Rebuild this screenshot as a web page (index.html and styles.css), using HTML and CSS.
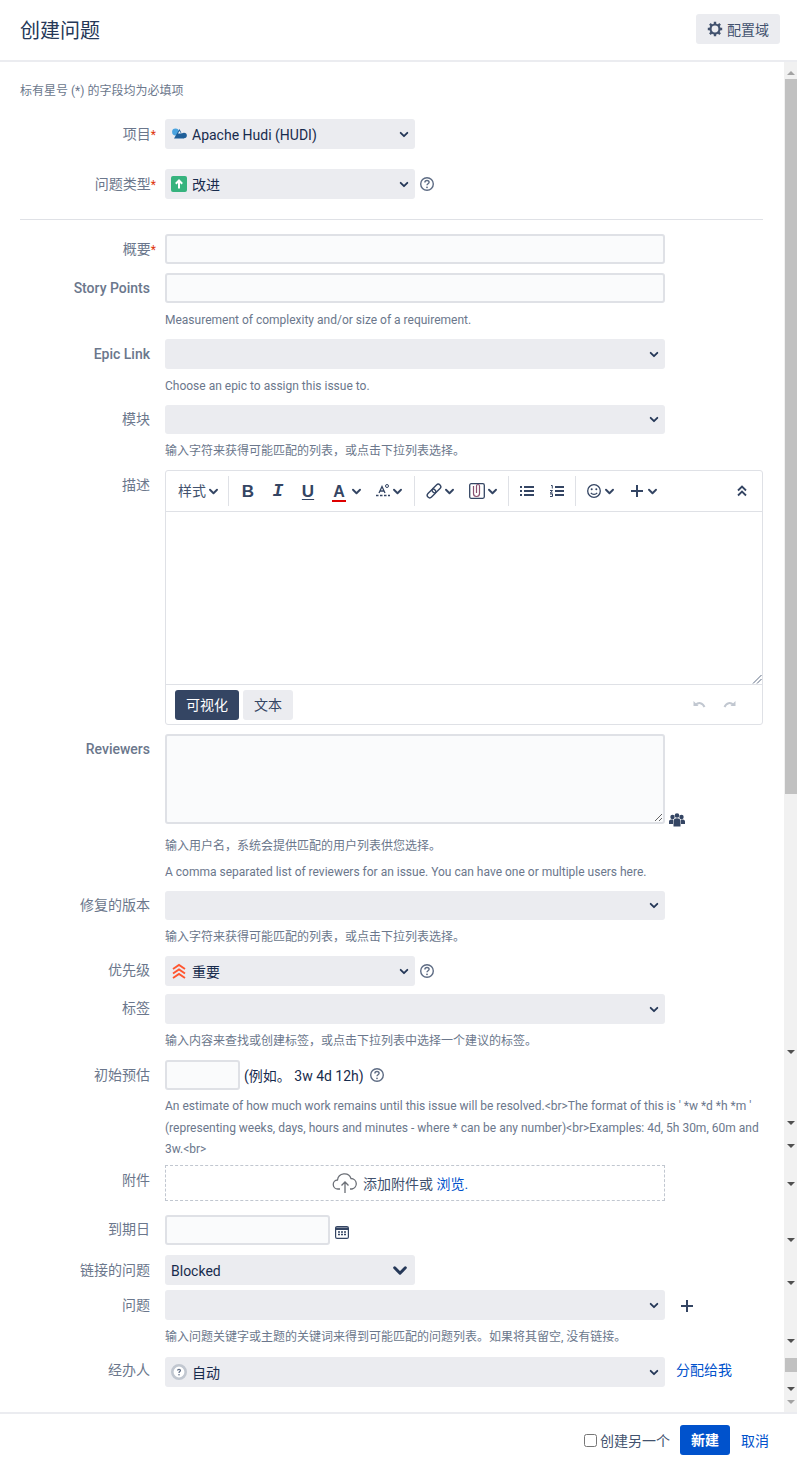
FILE: index.html
```html
<!DOCTYPE html>
<html lang="zh-CN">
<head>
    <meta charset="UTF-8">
    <meta name="viewport" content="width=device-width, initial-scale=1.0">
    <title>创建问题</title>
    <link rel="stylesheet" href="styles.css">
</head>
<body>

<!-- Shared icons -->
<svg class="defs" width="0" height="0">
    <symbol id="chev" viewBox="0 0 12 8"><path d="M2 2l4 4 4-4" fill="none" stroke="currentColor" stroke-width="2.200" stroke-linecap="round" stroke-linejoin="round"/></symbol>
    <symbol id="help" viewBox="0 0 16 16"><circle cx="8" cy="8" r="6.300" fill="none" stroke="currentColor" stroke-width="1.400"/><path d="M5.900 6.400c0-1.200 1-1.900 2.100-1.900s2.100.7 2.100 1.800c0 1.500-2.100 1.500-2.100 3" fill="none" stroke="currentColor" stroke-width="1.400"/><circle cx="8" cy="11.300" r=".9" fill="currentColor"/></symbol>
</svg>

<div class="dialog">
    <!-- Header -->
    <div class="dialog-head">
        <h1>创建问题</h1>
        <a href="#" class="config-btn">
            <svg width="16" height="16" viewBox="0 0 16 16"><circle cx="8" cy="8" r="4.500" fill="none" stroke="currentColor" stroke-width="2.200"/><path d="M8 .8v3M8 12.200v3M.8 8h3M12.200 8h3M2.900 2.900l2.100 2.100M11 11l2.100 2.100M2.900 13.100L5 11M11 5l2.100-2.100" stroke="currentColor" stroke-width="2.400"/></svg>
            配置域
        </a>
    </div>

    <div class="dialog-main">
        <form class="form">
            <p class="required-note">标有星号 (*) 的字段均为必填项</p>

            <div class="row gap-20">
                <label class="label">项目<span class="star">*</span></label>
                <div class="select short">
                    <svg class="opt-icon" width="16" height="16" viewBox="0 0 16 16"><circle cx="4.500" cy="6" r="3.400" fill="#4aa3df"/><circle cx="13" cy="9.500" r="2.800" fill="#1f5f99"/><path d="M3 12.500L8.500 3l4.500 9.500z" fill="#1f5f99"/><path d="M7 7.500L8.500 5 10 7.500z" fill="#fff"/></svg>
                    <span>Apache Hudi (HUDI)</span>
                    <svg class="chev"><use href="#chev"/></svg>
                </div>
            </div>

            <div class="row gap-20">
                <label class="label">问题类型<span class="star">*</span></label>
                <div class="select short">
                    <svg class="opt-icon" width="16" height="16" viewBox="0 0 16 16"><rect width="16" height="16" rx="2" fill="#36b37e"/><path d="M8 12.500V4.500M4.800 7.700L8 4.500l3.200 3.200" fill="none" stroke="#fff" stroke-width="2"/></svg>
                    <span>改进</span>
                    <svg class="chev"><use href="#chev"/></svg>
                </div>
                <svg class="help"><use href="#help"/></svg>
            </div>

            <hr class="divider">

            <div class="row">
                <label class="label">概要<span class="star">*</span></label>
                <input type="text" class="input long">
            </div>

            <div class="row gap-9">
                <label class="label strong">Story Points</label>
                <input type="text" class="input long">
            </div>
            <p class="desc">Measurement of complexity and/or size of a requirement.</p>

            <div class="row">
                <label class="label strong">Epic Link</label>
                <div class="select long"><svg class="chev"><use href="#chev"/></svg></div>
            </div>
            <p class="desc">Choose an epic to assign this issue to.</p>

            <div class="row">
                <label class="label high">模块</label>
                <div class="select long thin"><svg class="chev"><use href="#chev"/></svg></div>
            </div>
            <p class="desc">输入字符来获得可能匹配的列表，或点击下拉列表选择。</p>

            <!-- Editor -->
            <div class="row">
                <label class="label">描述</label>
                <div class="editor">
                    <div class="toolbar">
                        <div class="tool-group">
                            <span class="tool style-tool">样式<svg class="tool-chev"><use href="#chev"/></svg></span>
                        </div>
                        <div class="tool-group">
                            <span class="tool tool-b">B</span>
                            <span class="tool tool-i">I</span>
                            <span class="tool tool-u">U</span>
                            <span class="tool drop tool-a"><span class="color-a">A</span><svg class="tool-chev"><use href="#chev"/></svg></span>
                            <span class="tool drop">
                                <svg width="18" height="16" viewBox="0 0 18 16"><path d="M4 10L7 3.500 10 10M5.300 8h3.400" fill="none" stroke="currentColor" stroke-width="1.300"/><circle cx="12" cy="3" r="1.500" fill="none" stroke="currentColor"/><path d="M1 12.500h14" stroke="currentColor" stroke-width="1.300" stroke-dasharray="2.500 1.500"/></svg>
                                <svg class="tool-chev tight"><use href="#chev"/></svg>
                            </span>
                        </div>
                        <div class="tool-group">
                            <span class="tool drop">
                                <svg width="16" height="16" viewBox="0 0 16 16"><g transform="rotate(-45 8 8)" fill="none" stroke="currentColor" stroke-width="1.400"><rect x="-.5" y="5.500" width="10" height="5" rx="2.500"/><rect x="6.500" y="5.500" width="10" height="5" rx="2.500"/></g></svg>
                                <svg class="tool-chev"><use href="#chev"/></svg>
                            </span>
                            <span class="tool drop">
                                <svg width="16" height="16" viewBox="0 0 16 16"><rect x=".7" y=".7" width="14.600" height="14.600" rx="1.500" fill="none" stroke="currentColor" stroke-width="1.300"/><path d="M4.500 3v7.500a3 3 0 0 0 6 0V3a1.500 1.500 0 0 0-3 0v7" fill="none" stroke="#8a5070" stroke-width="1.200"/></svg>
                                <svg class="tool-chev"><use href="#chev"/></svg>
                            </span>
                        </div>
                        <div class="tool-group tight">
                            <span class="tool">
                                <svg width="14" height="12" viewBox="0 0 14 12"><path d="M0 2h2M4 2h10M0 6h2M4 6h10M0 10h2M4 10h10" stroke="currentColor" stroke-width="2"/></svg>
                            </span>
                            <span class="tool">
                                <svg width="14" height="12" viewBox="0 0 14 12"><path d="M1 .5h1.300v3M0 5.500h2.500L.3 8h2.400M0 9h2.500v2.500H0" fill="none" stroke="currentColor"/><path d="M5 2h9M5 6h9M5 10h9" stroke="currentColor" stroke-width="2"/></svg>
                            </span>
                        </div>
                        <div class="tool-group tight plain">
                            <span class="tool drop">
                                <svg width="16" height="16" viewBox="0 0 16 16"><circle cx="8" cy="8" r="6.300" fill="none" stroke="currentColor" stroke-width="1.300"/><circle cx="5.700" cy="6.300" r="1" fill="currentColor"/><circle cx="10.300" cy="6.300" r="1" fill="currentColor"/><path d="M4.800 9.800c1.500 2 4.900 2 6.400 0" fill="none" stroke="currentColor" stroke-width="1.200"/></svg>
                                <svg class="tool-chev"><use href="#chev"/></svg>
                            </span>
                            <span class="tool drop">
                                <svg width="16" height="16" viewBox="0 0 16 16"><path d="M8 2v12M2 8h12" stroke="currentColor" stroke-width="2"/></svg>
                                <svg class="tool-chev"><use href="#chev"/></svg>
                            </span>
                        </div>
                        <span class="collapse">
                            <svg width="10" height="12" viewBox="0 0 10 12"><path d="M1 5.500l4-4 4 4M1 10.500l4-4 4 4" fill="none" stroke="currentColor" stroke-width="1.800"/></svg>
                        </span>
                    </div>
                    <div class="editor-body">
                        <svg class="grip" width="10" height="10" viewBox="0 0 10 10"><path d="M9.500 1L1 9.500M9.500 5L5 9.500" stroke="#5e6c84"/></svg>
                    </div>
                    <div class="editor-foot">
                        <a href="#" class="mode on">可视化</a>
                        <a href="#" class="mode">文本</a>
                        <span class="history">
                            <svg width="15" height="10" viewBox="0 0 14 10"><path d="M1 1v5h5z" fill="currentColor"/><path d="M3 5c3-3 7-2.500 9 2" fill="none" stroke="currentColor" stroke-width="2"/></svg>
                            <svg width="15" height="10" viewBox="0 0 14 10"><path d="M13 1v5H8z" fill="currentColor"/><path d="M11 5C8 2 4 2.500 2 7" fill="none" stroke="currentColor" stroke-width="2"/></svg>
                        </span>
                    </div>
                </div>
            </div>

            <div class="row gap-9">
                <label class="label strong">Reviewers</label>
                <textarea class="input long reviewers"></textarea>
                <svg class="users" width="16" height="14" viewBox="0 0 16 14"><circle cx="3.500" cy="4" r="2.200" fill="#344563"/><circle cx="12.500" cy="4" r="2.200" fill="#344563"/><circle cx="8" cy="2.500" r="2.300" fill="#344563"/><path d="M0 11V8.500C0 7 1.500 6.500 3 6.500h1V11zM16 11V8.500c0-1.500-1.500-2-3-2h-1V11z" fill="#344563"/><path d="M4.500 13.500V8c0-2 1.500-2.800 3.500-2.800S11.500 6 11.500 8v5.500z" fill="#344563"/></svg>
            </div>
            <p class="desc first">输入用户名，系统会提供匹配的用户列表供您选择。</p>
            <p class="desc">A comma separated list of reviewers for an issue. You can have one or multiple users here.</p>

            <div class="row">
                <label class="label high">修复的版本</label>
                <div class="select long thin"><svg class="chev"><use href="#chev"/></svg></div>
            </div>
            <p class="desc">输入字符来获得可能匹配的列表，或点击下拉列表选择。</p>

            <div class="row">
                <label class="label high">优先级</label>
                <div class="select short">
                    <svg class="opt-icon" width="16" height="16" viewBox="0 0 16 16"><path d="M2 6l6-4 6 4M2 10.500l6-4 6 4M2 15l6-4 6 4" fill="none" stroke="#ff5630" stroke-width="1.900"/></svg>
                    <span>重要</span>
                    <svg class="chev"><use href="#chev"/></svg>
                </div>
                <svg class="help"><use href="#help"/></svg>
            </div>

            <div class="row gap-8">
                <label class="label high">标签</label>
                <div class="select long"><svg class="chev"><use href="#chev"/></svg></div>
            </div>
            <p class="desc">输入内容来查找或创建标签，或点击下拉列表中选择一个建议的标签。</p>

            <div class="row">
                <label class="label">初始预估</label>
                <input type="text" class="input tiny">
                <span class="estimate">(例如。 3w 4d 12h)</span>
                <svg class="help near"><use href="#help"/></svg>
            </div>
            <p class="desc tall">An estimate of how much work remains until this issue will be resolved.&lt;br&gt;The format of this is ' *w *d *h *m ' (representing weeks, days, hours and minutes - where * can be any number)&lt;br&gt;Examples: 4d, 5h 30m, 60m and 3w.&lt;br&gt;</p>

            <div class="row">
                <label class="label">附件</label>
                <div class="dropzone">
                    <svg width="26" height="22" viewBox="0 0 26 22"><path d="M8 17H6a4.500 4.500 0 0 1-.5-9A7 7 0 0 1 19 6.500 5.300 5.300 0 0 1 20 17h-2" fill="none" stroke="#6b6f76" stroke-width="1.300"/><path d="M13 21V10M9.500 13.500L13 10l3.500 3.500" fill="none" stroke="#6b6f76" stroke-width="1.300"/></svg>
                    <span>添加附件或 <a href="#">浏览.</a></span>
                </div>
            </div>

            <div class="row gap-14">
                <label class="label high">到期日</label>
                <input type="text" class="input date">
                <svg class="calendar" width="14" height="14" viewBox="0 0 14 14"><rect x=".6" y="1.600" width="12.800" height="11.800" rx="1.500" fill="none" stroke="#344563" stroke-width="1.200"/><path d="M1 2.500h12V5H1z" fill="#344563"/><path d="M3 7h2M6 7h2M9 7h2M3 9.500h2M6 9.500h2M9 9.500h2" stroke="#344563" stroke-width="1.400"/></svg>
            </div>

            <div class="row gap-10">
                <label class="label">链接的问题</label>
                <div class="select short">
                    <span>Blocked</span>
                    <svg class="chev big"><use href="#chev"/></svg>
                </div>
            </div>

            <div class="row gap-5">
                <label class="label">问题</label>
                <div class="select long"><svg class="chev"><use href="#chev"/></svg></div>
                <svg class="plus" width="14" height="14" viewBox="0 0 14 14"><path d="M7 1v12M1 7h12" stroke="#344563" stroke-width="2"/></svg>
            </div>
            <p class="desc wide-after">输入问题关键字或主题的关键词来得到可能匹配的问题列表。如果将其留空, 没有链接。</p>

            <div class="row">
                <label class="label top">经办人</label>
                <div class="select long">
                    <svg class="opt-icon" width="16" height="16" viewBox="0 0 16 16"><circle cx="8" cy="8" r="6.700" fill="#fff" stroke="#c1c7d0" stroke-width="2.600"/><path d="M6.500 6.500C6.500 5 9.500 5 9.500 6.500 9.500 7.700 8 7.500 8 9" fill="none" stroke="#5e6c84" stroke-width="1.200"/><circle cx="8" cy="10.800" r=".8" fill="#5e6c84"/></svg>
                    <span>自动</span>
                    <svg class="chev"><use href="#chev"/></svg>
                </div>
                <a href="#" class="assign-me">分配给我</a>
            </div>
        </form>

        <!-- Stacked scrollbar -->
        <div class="scrollbar">
            <div class="thumb thumb-main"></div>
            <div class="thumb thumb-small"></div>
            <i class="arrow up" style="top: 9px"></i>
            <i class="arrow" style="top: 988px"></i>
            <i class="arrow" style="top: 1059px"></i>
            <i class="arrow" style="top: 1082px"></i>
            <i class="arrow" style="top: 1120px"></i>
            <i class="arrow" style="top: 1176px"></i>
            <i class="arrow" style="top: 1219px"></i>
            <i class="arrow" style="top: 1277px"></i>
            <i class="arrow" style="top: 1325px"></i>
            <i class="arrow off" style="top: 1338px"></i>
        </div>
    </div>

    <!-- Footer -->
    <div class="dialog-foot">
        <label class="another"><input type="checkbox">创建另一个</label>
        <a href="#" class="create-btn">新建</a>
        <a href="#" class="cancel">取消</a>
    </div>
</div>

</body>
</html>
```

FILE: styles.css
```css
/* General Reset */
* {
    margin: 0;
    padding: 0;
    box-sizing: border-box;
}

body {
    font-family: Roboto, "Noto Sans CJK SC", sans-serif;
    font-size: 14px;
    color: #172b4d;
    background: #fff;
    overflow: hidden;
}

a {
    text-decoration: none;
    color: #0052cc;
}

.defs {
    position: absolute;
}

.dialog {
    display: flex;
    flex-direction: column;
    height: 1463px;
}

/* Header */
.dialog-head {
    display: flex;
    justify-content: space-between;
    align-items: center;
    flex: none;
    height: 62px;
    padding: 0 17px 2px 20px;
    border-bottom: 2px solid #ebecf0;
}

.dialog-head h1 {
    font-size: 20px;
    font-weight: 400;
    color: #253858;
}

.config-btn {
    display: flex;
    align-items: center;
    justify-content: center;
    gap: 4px;
    width: 84px;
    height: 30px;
    border-radius: 3px;
    background: #ebecf0;
    color: #42526e;
    font-size: 14px;
}

.dialog-main {
    display: flex;
    flex: 1;
    min-height: 0;
}

.form {
    flex: 1;
    padding: 20px 21px 0 20px;
}

.required-note {
    height: 17px;
    font-size: 12px;
    line-height: 19px;
    color: #6b778c;
}

/* Rows */
.row {
    display: flex;
    align-items: flex-start;
}

.gap-5 { margin-top: 5px; }
.gap-8 { margin-top: 8px; }
.gap-9 { margin-top: 9px; }
.gap-10 { margin-top: 10px; }
.gap-14 { margin-top: 14px; }
.gap-20 { margin-top: 20px; }

.label {
    flex: none;
    width: 130px;
    height: 29px;
    margin-right: 15px;
    line-height: 30px;
    text-align: right;
    color: #6b778c;
    font-size: 14px;
}

.label.strong {
    font-weight: 500;
}

.label.high {
    line-height: 28px;
}

.label.top {
    line-height: 26px;
}

.star {
    margin-right: -6px;
    color: #de350b;
    font-size: 12px;
}

.divider {
    height: 1px;
    border: none;
    background: #dfe1e6;
    margin: 20px 0 14px;
}

.desc {
    height: 18px;
    margin: 7px 0 11px 145px;
    font-size: 12px;
    line-height: 20px;
    color: #6b778c;
}

.desc.first {
    margin-top: 12px;
    margin-bottom: 8px;
}

.desc.tall {
    height: 64.5px;
    margin-top: 6px;
    margin-bottom: 4.5px;
    line-height: 21.5px;
}

.desc.wide-after {
    margin-bottom: 12px;
}

/* Fields */
.select {
    display: flex;
    align-items: center;
    height: 30px;
    padding-left: 6px;
    border-radius: 3px;
    background: #ebecf0;
    line-height: 30px;
}

.select span {
    margin-top: 1px;
}

.select.thin {
    height: 29px;
}

.short { width: 250px; }
.long { width: 500px; }

.opt-icon {
    flex: none;
    margin-right: 5px;
}

.chev {
    width: 10px;
    height: 7px;
    margin-left: auto;
    margin-right: 6px;
    color: #253858;
}

.chev.big {
    width: 16px;
    height: 11px;
    margin-right: 7px;
}

.help {
    width: 16px;
    height: 16px;
    margin: 7px 0 0 4px;
    color: #5e6c84;
}

.help.near {
    margin-left: 5px;
}

.input {
    display: block;
    height: 30px;
    border: 2px solid #dfe1e6;
    border-radius: 3px;
    background: #fafbfc;
}

.tiny { width: 75px; }
.date { width: 165px; }

.reviewers {
    height: 90px;
    resize: both;
}

.users {
    align-self: flex-end;
    margin: 0 0 -3px 4px;
}

.estimate {
    height: 30px;
    margin-left: 4px;
    font-size: 14px;
    line-height: 32px;
    color: #172b4d;
}

.dropzone {
    display: flex;
    align-items: center;
    justify-content: center;
    gap: 5px;
    width: 500px;
    height: 36px;
    padding-right: 30px;
    border: 1px dashed #c1c7d0;
    font-size: 14px;
    color: #42526e;
}

.calendar {
    margin: 10px 0 0 5px;
}

.plus {
    margin: 9px 0 0 15px;
}

.assign-me {
    margin-left: 11px;
    font-size: 14px;
    line-height: 26px;
}

/* Editor */
.editor {
    width: 598px;
    height: 255px;
    display: flex;
    flex-direction: column;
    border: 1px solid #dfe1e6;
    border-radius: 3px;
}

.toolbar {
    display: flex;
    align-items: center;
    flex: none;
    height: 41px;
    border-bottom: 1px solid #dfe1e6;
    color: #344563;
}

.tool-group {
    display: flex;
    align-items: center;
    height: 30px;
    padding: 0 3px 0 4px;
    border-right: 1px solid #dfe1e6;
}

.tool-group.tight {
    padding-left: 3px;
}

.tool-group.plain {
    border-right: none;
}

.tool {
    display: flex;
    align-items: center;
    justify-content: center;
    width: 30px;
    height: 30px;
    line-height: 1;
}

.tool.drop {
    justify-content: flex-start;
    gap: 2px;
    width: 43px;
    padding-left: 7px;
}

.tool.tool-a {
    width: 45px;
    gap: 0;
    padding-left: 9px;
}

.style-tool {
    width: auto;
    gap: 2px;
    padding: 0 6px 0 8px;
    font-size: 14px;
    color: #42526e;
}

.tool-b, .tool-u, .color-a {
    font-family: "Liberation Sans", sans-serif;
    font-weight: 700;
    font-size: 17px;
}

.tool-i {
    font-family: "Liberation Mono", monospace;
    font-style: italic;
    font-weight: 700;
    font-size: 18px;
}

.tool-u {
    text-decoration: underline;
    text-underline-offset: 2px;
}

.color-a {
    display: block;
    width: 14px;
    height: 17px;
    border-bottom: 2px solid #de0000;
    font-size: 16px;
    line-height: 14px;
    text-align: center;
    margin: 4px 5px 0 0;
}

.tool-chev {
    flex: none;
    width: 11px;
    height: 7px;
    color: #344563;
}

.tool-chev.tight {
    margin-left: -3px;
}

.collapse {
    display: flex;
    margin-left: auto;
    margin-right: 15px;
    color: #344563;
}

.editor-body {
    position: relative;
    flex: 1;
    border-bottom: 1px solid #dfe1e6;
}

.grip {
    position: absolute;
    right: 0;
    bottom: 0;
}

.editor-foot {
    display: flex;
    align-items: center;
    gap: 4px;
    flex: none;
    height: 39px;
    padding-left: 9px;
}

.mode {
    display: block;
    height: 30px;
    padding: 0 11px;
    border-radius: 3px;
    background: #ebecf0;
    color: #344563;
    font-size: 14px;
    line-height: 30px;
}

.mode.on {
    background: #344563;
    color: #fff;
}

.history {
    display: flex;
    gap: 15px;
    margin-left: auto;
    margin-right: 25px;
    color: #c1c7d0;
}

/* Scrollbar */
.scrollbar {
    position: relative;
    flex: none;
    width: 13px;
    background: #f1f1f1;
}

.thumb {
    position: absolute;
    left: 1px;
    right: 0;
    background: #c1c1c1;
}

.thumb-main {
    top: 17px;
    height: 715px;
}

.thumb-small {
    top: 1296px;
    height: 14px;
}

.arrow {
    position: absolute;
    left: 3px;
    width: 0;
    height: 0;
    border-left: 4px solid transparent;
    border-right: 4px solid transparent;
    border-top: 4px solid #505050;
}

.arrow.up {
    border-top: none;
    border-bottom: 4px solid #a3a3a3;
}

.arrow.off {
    border-top-color: #a3a3a3;
}

/* Footer */
.dialog-foot {
    display: flex;
    align-items: center;
    justify-content: flex-end;
    flex: none;
    height: 51px;
    padding: 3px 28px 0 0;
    border-top: 2px solid #ebecf0;
}

.another {
    display: flex;
    align-items: center;
    gap: 3px;
    font-size: 14px;
    color: #42526e;
}

.another input {
    width: 13px;
    height: 13px;
}

.create-btn {
    display: block;
    width: 50px;
    height: 30px;
    margin-left: 10px;
    border-radius: 3px;
    background: #0052cc;
    color: #fff;
    font-size: 14px;
    font-weight: 700;
    line-height: 30px;
    text-align: center;
}

.cancel {
    margin-left: 11px;
    font-size: 14px;
}
```
